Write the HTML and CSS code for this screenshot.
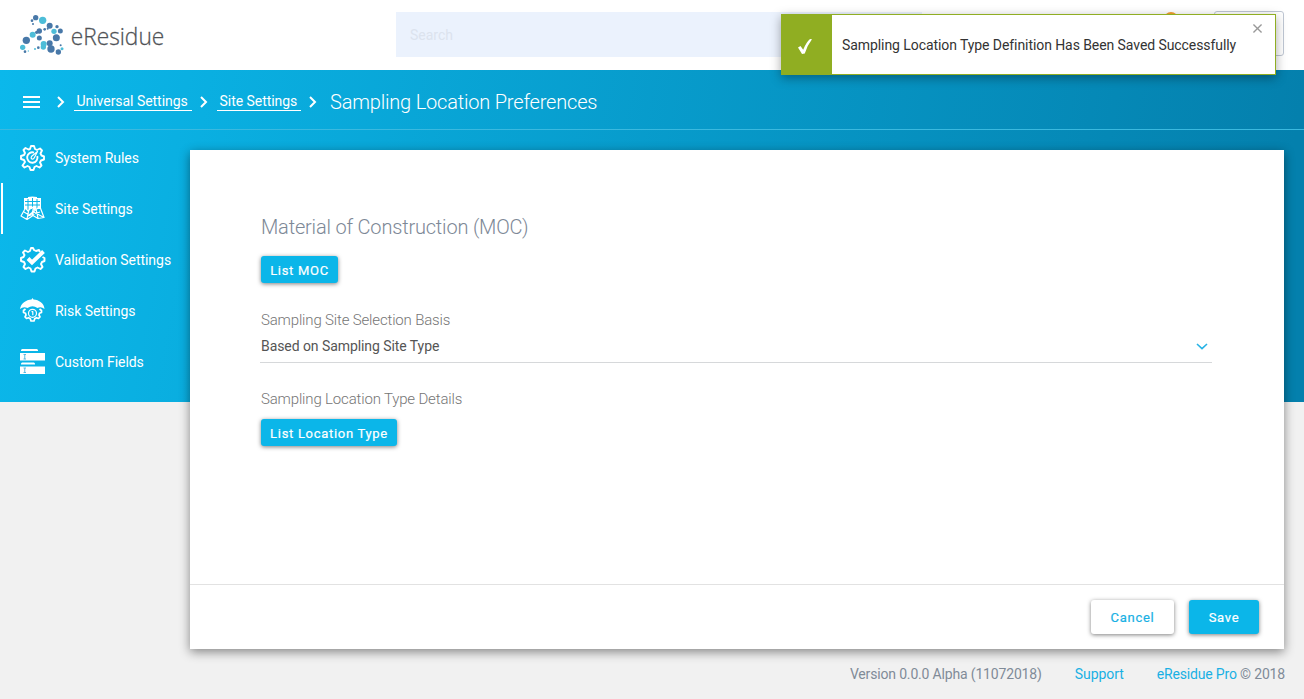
FILE: index.html
```
<!DOCTYPE html>
<html lang="en">
<head>
<meta charset="utf-8">
<title>eResidue</title>
<link rel="stylesheet" href="styles.css">
</head>
<body>
<header class="topbar">
  <svg class="logo" viewBox="30 27 450 135" role="img" aria-label="eResidue">
    <g fill="#4878a8">
      <circle cx="77" cy="38" r="8"/><circle cx="66" cy="47" r="4"/><circle cx="69" cy="57" r="3"/>
      <circle cx="119" cy="62" r="9"/><circle cx="141" cy="65" r="5"/><circle cx="151" cy="78" r="7.500"/>
      <circle cx="88" cy="78" r="8"/><circle cx="80" cy="82" r="5"/><circle cx="104" cy="73" r="4"/><circle cx="113" cy="71" r="3"/>
      <circle cx="88" cy="99" r="7.500"/><circle cx="49" cy="106" r="11"/><circle cx="139" cy="98" r="10.500"/>
      <circle cx="119" cy="115" r="9"/><circle cx="123" cy="132" r="11"/><circle cx="145" cy="141" r="8"/>
      <circle cx="45" cy="140" r="4"/><circle cx="152" cy="121" r="3"/><circle cx="85" cy="128" r="4"/>
    </g>
    <g fill="#4dbdd8">
      <circle cx="98" cy="46" r="11"/><circle cx="132" cy="79" r="8"/><circle cx="68" cy="89" r="9"/>
      <circle cx="101" cy="117" r="9"/><circle cx="100" cy="126" r="8"/><circle cx="38" cy="127" r="8"/>
      <circle cx="156" cy="131" r="4.500"/><circle cx="75" cy="132" r="3"/><circle cx="55" cy="138" r="2"/>
    </g>
    <text class="logo-text" x="182" y="119" textLength="281" lengthAdjust="spacingAndGlyphs">eResidue</text>
  </svg>
  <div class="search">Search</div>
  <div class="user-box"></div>
  <i class="alert-dot"></i>
</header>

<nav class="crumbs">
  <svg class="menu" viewBox="0 0 17 12"><path d="M0 1h17M0 6h17M0 11h17"/></svg>
  <svg class="sep" viewBox="0 0 8 12"><path d="M1 1l5 5-5 5"/></svg>
  <a class="crumb crumb-first">Universal Settings</a>
  <svg class="sep" viewBox="0 0 8 12"><path d="M1 1l5 5-5 5"/></svg>
  <a class="crumb crumb-second">Site Settings</a>
  <svg class="sep" viewBox="0 0 8 12"><path d="M1 1l5 5-5 5"/></svg>
  <h1 class="title">Sampling Location Preferences</h1>
</nav>

<div class="main">
  <aside class="side">
    <a class="item">
      <svg class="icon" viewBox="0 0 25 25">
        <path class="line" d="M10 4l1-3h3l1 3 2 1 3-1.500 2 2-1.500 3 1 2 2.500 1v3l-3 1-1 2 1.500 3-2 2-3-1.500-2 1-1 3h-3l-1-3-2-1-3 1.500-2-2L5 17l-1-2-3-1v-3l3-1 1-2-1.500-3 2-2 3 1.500z"/>
        <path class="line" d="M14 7.600A5.200 5.200 0 1 0 17.300 11"/>
        <path class="line thin" d="M17.500 6.500l-5.800 4.700q-1.200 2 .2 2.800 1.500.5 2.400-1.200z"/></svg>
      <span>System Rules</span></a>
    <a class="item active">
      <svg class="icon" viewBox="0 0 25 25">
        <path fill="#fff" d="M4 2h4V1Q12 0 17 1v1h4v11H4z"/>
        <path class="cut" d="M8 3v10M12.500 2v11M17 3v10M5 5.500h15M5 9h15"/>
        <path class="line thin" d="M5.500 12L1 20l6 3.500 6-4 5 3 6-1L20 11l-5 3-3-3-4 4zM9 13L7 23M13 12v8M16 13l2 9M4 16l5 3 9-7M8 20l12-4M12 15l11 6"/></svg>
      <span>Site Settings</span></a>
    <a class="item">
      <svg class="icon" viewBox="0 0 25 25">
        <path class="line" d="M20 5L19 3l-3 1-2-1-1-2h-2l-1 3-2 1-3-1.500-2 2L4.500 8l-1 2L1 11v3l3 1 1 2-1.500 3 2 2 3-1.500 2 1 1 3h3l1-3 2-1 3 1.500 2-2-1.500-3 1-2 2.500-1v-3l-2-1"/>
        <path class="line bold" d="M8 11.500l4 4L23.500 4.500"/></svg>
      <span>Validation Settings</span></a>
    <a class="item">
      <svg class="icon" viewBox="0 0 25 25">
        <path fill="#fff" d="M0 11C1 5 6 2 11.500 1.500L12.500 0l1 1.500C19 2 24 5 24.500 11Q21 8 17.500 10 12.500 6.500 7.500 10 3.500 8 0 11z"/>
        <circle class="line thin" cx="12.500" cy="15.300" r="4"/>
        <path class="line gear" d="M5.500 11l-2 1.500v2l2 .8.500 1.700-1 2 1.500 1.500 2-.8 1.800 1 .7 2.300h3l.7-2.300 1.800-1 2 .8 1.500-1.500-1-2 .5-1.700 2-.8v-2l-2-1.500"/>
        <path class="line thin" d="M11.500 13.700h1.300v3.600"/></svg>
      <span>Risk Settings</span></a>
    <a class="item">
      <svg class="icon" viewBox="0 0 25 25">
        <path fill="#fff" d="M2 0h15l1 1v1H1V1zM0 4h25v7.500H0zM2 13.500h12l1 1v1H1v-1zM0 17.500h25V25H0z"/>
        <path d="M3.500 5.500h2.500M4.750 5.500v4.500M3.500 10h2.500M3.500 19h2.500M4.750 19v4.500M3.500 23.500h2.500" stroke="#4fb4de" stroke-width=".9"/></svg>
      <span>Custom Fields</span></a>
  </aside>

  <main class="card">
    <section class="content">
      <h2 class="heading">Material of Construction (MOC)</h2>
      <button class="btn small moc">List MOC</button>
      <div class="label basis">Sampling Site Selection Basis</div>
      <div class="select"><span>Based on Sampling Site Type</span>
        <svg class="chevron" viewBox="0 0 12 7"><path d="M1 1l5 4.700L11 1"/></svg></div>
      <div class="label details">Sampling Location Type Details</div>
      <button class="btn small loc">List Location Type</button>
    </section>
    <div class="actions">
      <button class="btn cancel">Cancel</button>
      <button class="btn save">Save</button>
    </div>
  </main>
</div>

<footer class="footer">
  <span class="version">Version 0.0.0 Alpha (11072018)</span>
  <a class="support">Support</a>
  <span class="copy"><a>eResidue Pro</a> © 2018</span>
</footer>

<div class="toast">
  <div class="toast-mark"><svg viewBox="0 0 16 17"><path d="M1 9.500l2.500-1.500 2.700 3.800Q9 4.500 13 1l2 .3Q10.500 7 7.800 15.500L5 16z"/></svg></div>
  <span class="toast-text">Sampling Location Type Definition Has Been Saved Successfully</span>
  <svg class="close" viewBox="0 0 10 10"><path d="M.5.5l9 9M9.500.5l-9 9"/></svg>
</div>
</body>
</html>
```

FILE: styles.css
```
* { box-sizing: border-box; }
body {
  margin: 0;
  height: 699px;
  overflow: hidden;
  font: 14px/20px Roboto, "Liberation Sans", sans-serif;
  background: linear-gradient(100deg, #0bb8eb 0%, #0480ad 96%) 0 70px / 100% 332px no-repeat #f1f1f1;
}
h1, h2 { margin: 0; font-weight: 300; }
svg { display: block; flex: none; overflow: visible; }

.topbar { position: relative; display: flex; height: 70px; background: #fff; }
.logo { width: 150px; height: 45px; margin: 14px 0 0 20px; }
.logo-text { font: 300 69px "Open Sans", "Noto Sans", sans-serif; fill: #505357; stroke: #505357; stroke-width: .8; }
.search {
  width: 526px; height: 45px; margin: 12px 0 0 226px; padding: 1px 14px 0;
  line-height: 45px; color: #dce3ee; background: #ebf2fd;
}
.user-box { width: 70px; height: 45px; margin: 11px 0 0 292px; border: 1px solid #bfc7d3; border-radius: 3px; }
.alert-dot { position: absolute; left: 1164px; top: 12px; width: 14px; height: 14px; border-radius: 50%; background: #f5a030; }

.crumbs { display: flex; align-items: center; height: 60px; padding: 0 0 0 23px; color: #fff; border-bottom: 1px solid #3bb9df; }
.crumbs svg path { fill: none; stroke: #fff; stroke-width: 2; }
.menu { width: 17px; height: 12px; margin: 4px 17px 0 0; }
.sep { width: 8px; height: 12px; margin-top: 5px; }
.crumb { height: 19px; margin: 3px 8px 0; padding: 0 0 0 3px; line-height: 18px; border-bottom: 1px solid #fff; white-space: nowrap; letter-spacing: -.04px; }
.crumb-first { width: 118px; margin-left: 8.500px; }
.crumb-second { width: 84px; margin-left: 9px; }
.title { margin: 5px 0 0 13.500px; font-size: 20px; line-height: 26px; letter-spacing: -.19px; white-space: nowrap; }

.main { display: flex; height: 519px; }
.side { width: 190px; padding-top: 2px; }
.item { display: flex; align-items: center; height: 51px; padding-left: 20px; color: #fff; letter-spacing: -.04px; white-space: nowrap; }
.item.active { box-shadow: inset 1px 0 #0bb6e8, inset 3px 0 #fff; }
.icon { width: 25px; height: 25px; margin: -1px 10px 0 0; }
.line { fill: none; stroke: #fff; stroke-width: 1.900; stroke-linejoin: round; }
.thin { stroke-width: 1.200; }
.bold { stroke-width: 4; stroke-linejoin: miter; }
.gear { stroke-width: 1.700; }
.cut { fill: none; stroke: #0bb5e7; stroke-width: 1; }

.card { display: flex; flex-direction: column; width: 1094px; height: 499px; margin-top: 20px; background: #fff; box-shadow: 0 3px 10px rgba(0, 0, 0, .45); }
.content { flex: 1; padding: 62px 72px 0 71px; }
.heading { font-size: 20px; line-height: 30px; letter-spacing: -.19px; color: #7d8896; }
.btn {
  display: block; padding: 2px 0 0; border: 0; border-radius: 3px;
  font: 400 13px/20px Roboto, sans-serif; letter-spacing: .7px; -webkit-text-stroke: .2px;
  color: #fff; background: #0bb6e9; box-shadow: 0 1px 4px rgba(0, 0, 0, .5);
}
.small { height: 27px; }
.moc { width: 77px; margin-top: 14px; }
.loc { width: 136px; margin-top: 10px; }
.label { font-weight: 300; line-height: 20px; letter-spacing: -.16px; color: #757575; font-size: 15px; }
.basis { margin-top: 27px; }
.details { margin-top: 26px; }
.select { display: flex; align-items: center; justify-content: space-between; height: 33px; margin-left: -1px; padding: 0 4px 0 1px; color: #555; letter-spacing: -.07px; border-bottom: 1px solid #d6d8da; }
.chevron { width: 12px; height: 7px; margin-top: 1px; }
.chevron path { fill: none; stroke: #27b3e6; stroke-width: 1.600; }
.actions { display: flex; justify-content: flex-end; gap: 15px; height: 65px; padding: 15px 25px 0 0; border-top: 1px solid #e2e2e2; }
.actions .btn { height: 34px; }
.cancel { width: 83px; color: #19b0e4; background: #fff; }
.save { width: 70px; }

.footer { display: flex; justify-content: flex-end; padding: 15px 19px 0 0; color: #808b98; letter-spacing: -.17px; white-space: nowrap; }
.footer a { color: #19b0e4; }
.support { margin: 0 33px; letter-spacing: -.05px; }

.toast {
  position: absolute; left: 781px; top: 14px; display: flex; align-items: center;
  width: 495px; height: 61px; border: 1px solid #90ae22; background: #fff;
  box-shadow: 0 3px 10px rgba(0, 0, 0, .35); color: #333;
}
.toast-mark { display: flex; align-items: center; justify-content: center; width: 50px; height: 59px; padding: 4px 4px 0 0; background: #90ae22; }
.toast-mark svg { width: 16px; height: 17px; fill: #fff; }
.toast-text { margin-left: 10px; letter-spacing: -.075px; white-space: nowrap; }
.close { position: absolute; right: 13px; top: 9px; width: 9px; height: 9px; }
.close path { stroke: #999; stroke-width: 1.500; }
```
